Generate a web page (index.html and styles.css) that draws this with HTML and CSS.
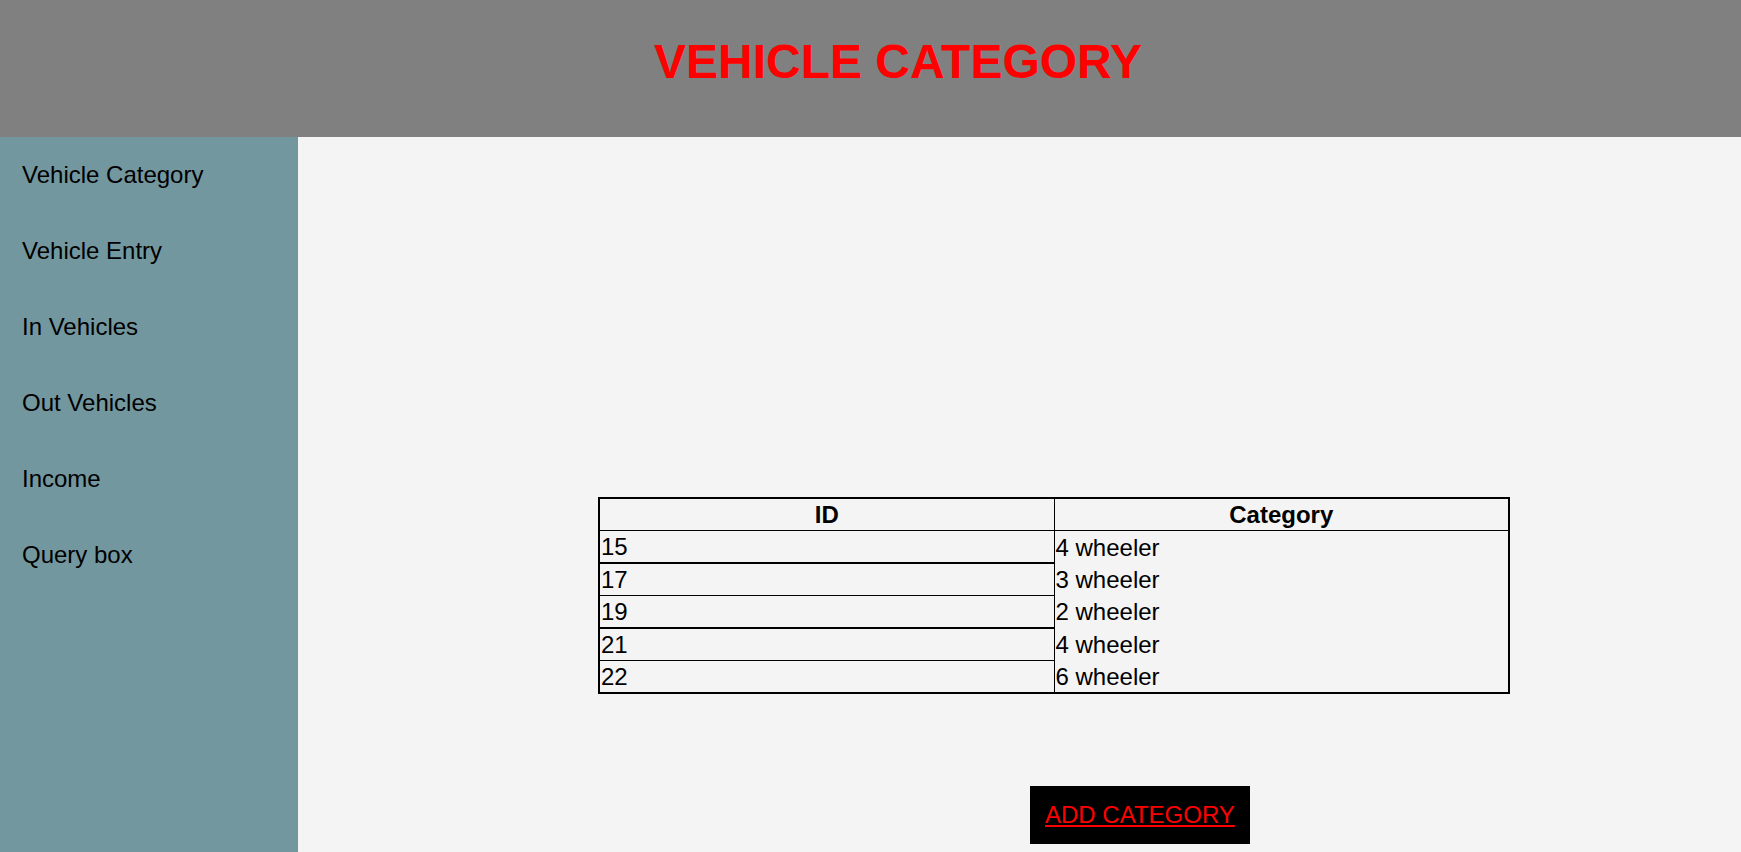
FILE: index.html
```html
<!DOCTYPE html>
<html lang="en">
	<head>
		<meta charset="UTF-8" />
		<meta name="viewport" content="width=device-width, initial-scale=1" />
		<title>Vehicle Category</title>
		<link rel="stylesheet" href="styles.css">
	</head>
	<body>
		<div class="header">
			<h1>VEHICLE CATEGORY</h1>
		</div>
		<div class="wrap">
			<div class="sidebar">
				<a href="#">Vehicle Category</a>
				<a href="#">Vehicle Entry</a>
				<a href="#">In Vehicles</a>
				<a href="#">Out Vehicles</a>
				<a href="#">Income</a>
				<a href="#">Query box</a>
			</div>
			<div class="main">
				<table class="cat-table">
					<tr>
						<th>ID</th>
						<th>Category</th>
					</tr>
					<tr>
						<td class="id thick">15</td>
						<td class="cat">4 wheeler</td>
					</tr>
					<tr>
						<td class="id">17</td>
						<td class="cat">3 wheeler</td>
					</tr>
					<tr>
						<td class="id thick">19</td>
						<td class="cat">2 wheeler</td>
					</tr>
					<tr>
						<td class="id">21</td>
						<td class="cat">4 wheeler</td>
					</tr>
					<tr>
						<td class="id">22</td>
						<td class="cat">6 wheeler</td>
					</tr>
				</table>
				<div class="add">
					<a class="btn-add" href="#">ADD CATEGORY</a>
				</div>
			</div>
		</div>
	</body>
</html>
```

FILE: styles.css
```css
body {
	margin: 0;
	font-family: "Liberation Sans", Arial, sans-serif;
	background-color: #f4f4f4;
}

.header {
	background-color: #808080;
	height: 137px;
	box-sizing: border-box;
	padding-top: 34px;
	padding-left: 55px;
	text-align: center;
}

.header h1 {
	margin: 0;
	font-size: 48px;
	color: red;
}

.wrap {
	display: flex;
	min-height: calc(100vh - 137px);
}

.sidebar {
	width: 298px;
	flex-shrink: 0;
	background-color: #73979f;
}

.sidebar a {
	display: block;
	padding: 24px 22px;
	color: black;
	text-decoration: none;
	font-size: 24px;
}

.main {
	flex: 1;
	padding-top: 360px;
	padding-left: 300px;
}

.cat-table {
	width: 912px;
	border-collapse: collapse;
	border: 2px solid black;
	font-size: 24px;
}

.cat-table th {
	border: 1px solid black;
	padding: 2px 1px 1px;
	width: 50%;
}

.cat-table td {
	padding: 2px 1px 1px;
	text-align: left;
}

.cat-table .id {
	border: 1px solid black;
}

.cat-table .thick {
	border-bottom: 2px solid black;
}

.cat-table .cat {
	border-left: 1px solid black;
}

.add {
	margin-top: 92px;
	padding-left: 432px;
}

.btn-add {
	display: inline-block;
	background-color: black;
	color: red;
	font-size: 24px;
	padding: 15px;
}
```
